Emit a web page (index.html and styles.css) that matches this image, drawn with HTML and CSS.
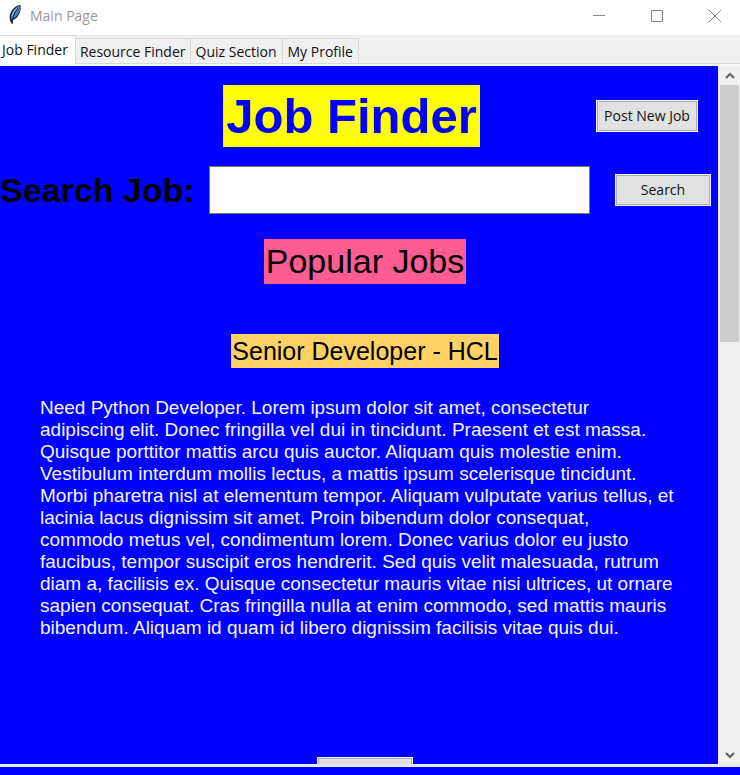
FILE: index.html
```html
<!DOCTYPE html>
<html lang="en">
<head>
<meta charset="utf-8">
<title>Main Page</title>
<link rel="stylesheet" href="styles.css">
</head>
<body>
<header class="titlebar">
  <svg class="feather" viewBox="0 0 16 22" aria-hidden="true">
    <path d="M13 1C9 1 5 5 3 10c-1 3 0 5 0 7l2 3 1-4c3-1 6-4 7-8 1-3 1-6 0-7z" fill="#2b2f38"/>
    <path d="M12 2C9 3 5 8 4 13l1 2c3-1 6-4 7-7 1-3 1-5 0-6z" fill="#4a82c4"/>
    <path d="M11 4C8 8 6 12 5 20" fill="none" stroke="#1c1c1c"/>
    <path d="M10 4C8 6 6 8 5 12" fill="none" stroke="#a9cdf0"/>
  </svg>
  <span class="window-name">Main Page</span>
  <div class="window-controls">
    <button class="window-button" aria-label="Minimize"><svg viewBox="0 0 12 12"><path d="M0 5.5h12"/></svg></button>
    <button class="window-button" aria-label="Maximize"><svg viewBox="0 0 12 12"><path d="M.5.5h11v11H.5z"/></svg></button>
    <button class="window-button" aria-label="Close"><svg viewBox="0 0 12 12"><path d="M0 0l12 12M12 0L0 12"/></svg></button>
  </div>
</header>
<nav class="tabs" role="tablist">
  <button class="tab tab-active" role="tab" aria-selected="true">Job Finder</button>
  <button class="tab" role="tab" aria-selected="false">Resource Finder</button>
  <button class="tab" role="tab" aria-selected="false">Quiz Section</button>
  <button class="tab" role="tab" aria-selected="false">My Profile</button>
</nav>
<div class="view">
  <main class="page">
    <div class="heading-row">
      <h1 class="heading">Job Finder</h1>
      <button class="button post">Post New Job</button>
    </div>
    <form class="search">
      <label class="search-label" for="job">Search Job:</label>
      <input class="search-input" id="job" type="text">
      <button class="button submit" type="button">Search</button>
    </form>
    <section class="jobs">
      <h2 class="popular">Popular Jobs</h2>
      <h3 class="job-title">Senior Developer - HCL</h3>
      <p class="job-text">Need Python Developer. Lorem ipsum dolor sit amet, consectetur<br>
        adipiscing elit. Donec fringilla vel dui in tincidunt. Praesent et est massa.<br>
        Quisque porttitor mattis arcu quis auctor. Aliquam quis molestie enim.<br>
        Vestibulum interdum mollis lectus, a mattis ipsum scelerisque tincidunt.<br>
        Morbi pharetra nisl at elementum tempor. Aliquam vulputate varius tellus, et<br>
        lacinia lacus dignissim sit amet. Proin bibendum dolor consequat,<br>
        commodo metus vel, condimentum lorem. Donec varius dolor eu justo<br>
        faucibus, tempor suscipit eros hendrerit. Sed quis velit malesuada, rutrum<br>
        diam a, facilisis ex. Quisque consectetur mauris vitae nisi ultrices, ut ornare<br>
        sapien consequat. Cras fringilla nulla at enim commodo, sed mattis mauris<br>
        bibendum. Aliquam id quam id libero dignissim facilisis vitae quis dui.</p>
      <button class="button apply" aria-label="Open job"></button>
    </section>
  </main>
  <div class="scrollbar">
    <button class="arrow" aria-label="Scroll up"><svg viewBox="0 0 10 8"><path d="M1 6l4-4 4 4"/></svg></button>
    <div class="track"><div class="thumb"></div></div>
    <button class="arrow" aria-label="Scroll down"><svg viewBox="0 0 10 8"><path d="M1 2l4 4 4-4"/></svg></button>
  </div>
</div>
<footer class="edge"></footer>
</body>
</html>
```
FILE: styles.css
```css
* { box-sizing: border-box; }
body {
  margin: 0;
  height: 100vh;
  display: flex;
  flex-direction: column;
  background: #0000ff;
  color: #000;
  font-family: "Liberation Sans", Arial, sans-serif;
}
button { font: 14px/20px "Open Sans", "Segoe UI", sans-serif; color: #111; padding: 0; border-radius: 0; }
h1, h2, h3, p { margin: 0; font-weight: normal; }

.titlebar { display: flex; flex: none; height: 35px; padding-left: 7px; background: #fff; }
.feather { width: 16px; height: 22px; margin-top: 4px; }
.window-name { margin-left: 7px; font: 14px/32px "Open Sans", "Segoe UI", sans-serif; color: #999; }
.window-controls { display: flex; gap: 12px; margin-left: auto; padding-right: 2px; }
.window-button { width: 46px; height: 32px; border: 0; background: none; display: grid; place-items: center; }
.window-button svg { width: 12px; height: 12px; fill: none; stroke: #888; }

.tabs { display: flex; flex: none; align-items: flex-end; height: 31px; background: #f0f0f0; border-bottom: 2px solid #f7f7f7; box-shadow: inset 0 -1px #dcdcdc; }
.tab { height: 26px; padding: 2px 4px 0; border: 1px solid #d9d9d9; border-left: 0; background: #f0f0f0; white-space: nowrap; }
.tab-active { height: 29px; padding: 0 7px 0 2px; background: #fff; border-bottom: 0; }
.tab:nth-child(n+3) { padding: 2px 5px 0; }

.view { display: flex; flex: 1; min-height: 0; }
.page { flex: 1; min-width: 0; overflow: hidden; padding-top: 19px; }
.heading-row { display: grid; grid-template-columns: 1fr auto 1fr; align-items: center; padding-right: 20px; padding-left: 5px; }
.heading { grid-column: 2; padding: 0 3px; background: #ffff00; color: #0000ff; font-size: 49px; line-height: 62px; font-weight: bold; }
.button { height: 32px; border: 1px solid #f4f4f4; background: #e1e1e1; box-shadow: inset 0 0 0 1px #adadad; }
.post { width: 102px; justify-self: end; }
.search { display: flex; align-items: center; margin-top: 19px; padding-right: 7px; }
.search-label { font-size: 34px; line-height: 46px; font-weight: bold; white-space: nowrap; }
.search-input { flex: 1; min-width: 0; height: 48px; margin: 0 25px 0 14px; border: 1px solid #7a7a7a; background: #fff; font: 34px "Liberation Sans", sans-serif; }
.submit { width: 96px; }
.jobs { display: flex; flex-direction: column; align-items: center; margin-top: 25px; padding-left: 12px; }
.popular { padding: 0 2px; background: #ff5c93; font-size: 34px; line-height: 45px; }
.job-title { margin-top: 50px; padding: 0 1px; background: #ffd064; font-size: 25px; line-height: 34px; }
.job-text { align-self: flex-start; margin: 29px 0 0 28px; color: #f4f4ff; font-size: 19px; line-height: 22px; white-space: nowrap; }
.apply { flex: none; width: 96px; margin-top: 118px; }

.scrollbar { display: flex; flex: none; flex-direction: column; width: 22px; padding: 0 1px 0 2px; background: #f0f0f0; }
.arrow { height: 19px; border: 0; background: none; display: grid; place-items: center; }
.arrow svg { width: 10px; height: 8px; fill: none; stroke: #606060; stroke-width: 2; }
.track { flex: 1; }
.thumb { height: 39%; background: #cdcdcd; }
.edge { flex: none; height: 11px; border-top: 3px solid #e8e8e8; }
```
